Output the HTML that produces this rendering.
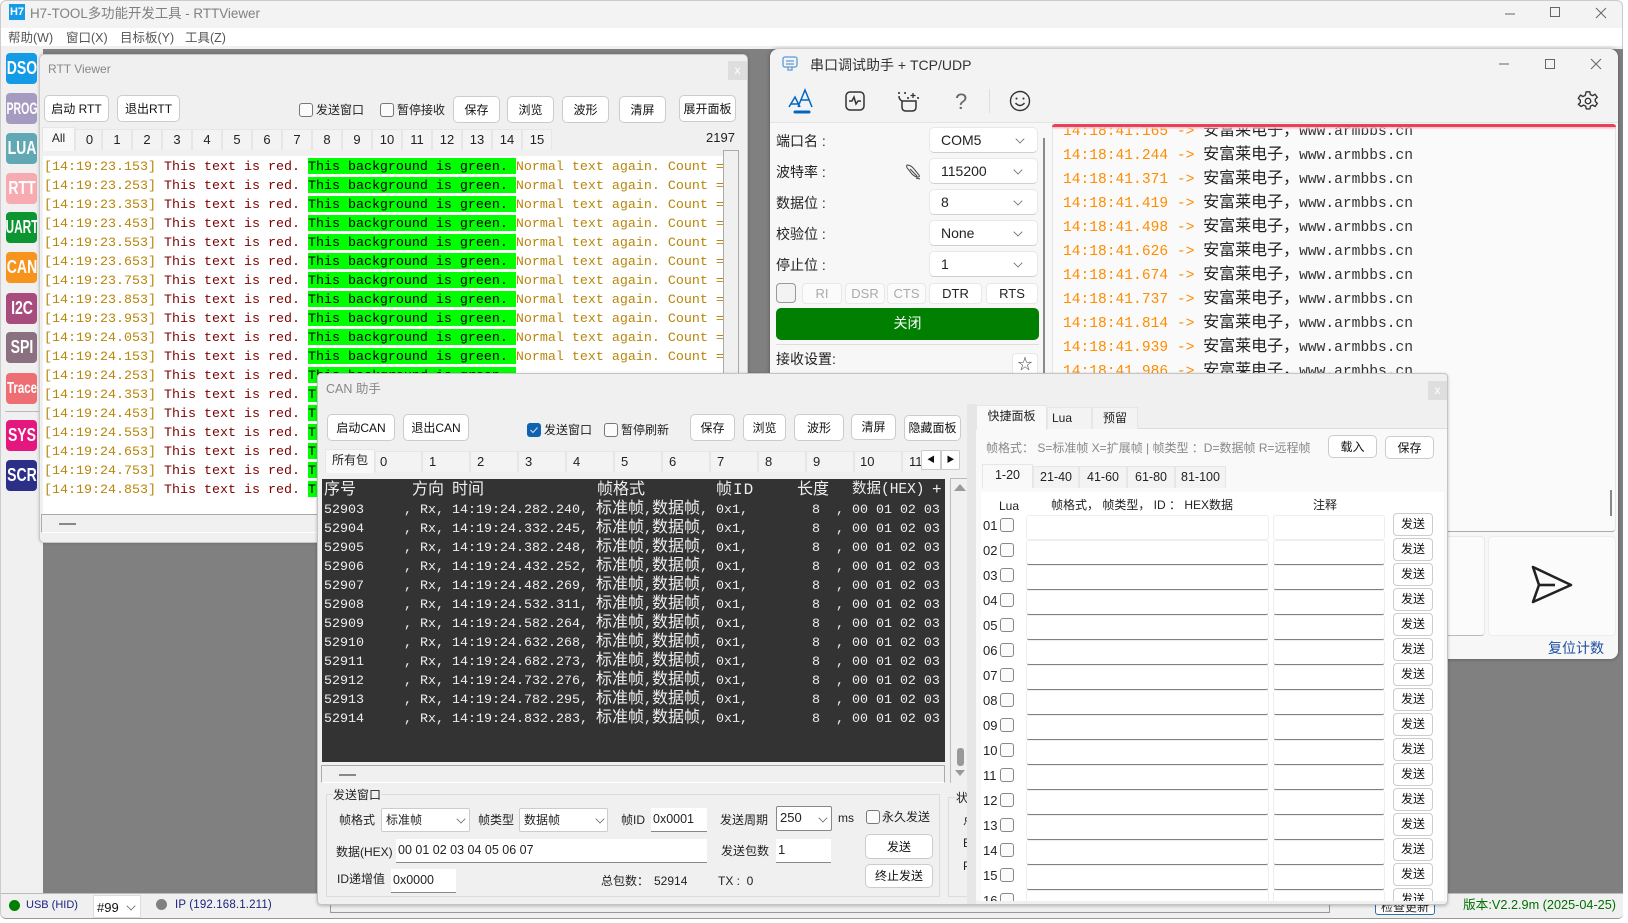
<!DOCTYPE html>
<html lang="zh"><head><meta charset="utf-8"><title>H7-TOOL RTTViewer</title>
<style>
*{box-sizing:border-box;margin:0;padding:0}
html,body{width:1628px;height:923px;overflow:hidden;background:#fff}
body{position:relative;font:12px/16px "Liberation Sans","Noto Sans CJK SC",sans-serif;color:#222}
.p{position:absolute}
.t{position:absolute;white-space:nowrap;line-height:16px}
.b{position:absolute;display:flex;align-items:center;justify-content:center;background:#fff;border:1px solid #ccc;border-radius:5px;white-space:nowrap;font-size:12px;color:#111}
.c{position:absolute;width:14px;height:14px;border:1px solid #777;border-radius:3px;background:#fbfbfb}
.k{position:absolute;width:31px;height:31px;border-radius:4px;color:#fff;font-weight:bold;font-size:18px;line-height:31px;text-align:center;left:6px;overflow:hidden}
.k span{display:block;width:80px;margin-left:-24.5px;text-align:center;transform:scaleX(.78);transform-origin:center}
.tb{position:absolute;background:#f3f3f3;border:1px solid #e6e6e6;border-bottom:0;font-size:13px;padding:2px 0 0 0;height:21px;line-height:16px;text-align:center}
.r{position:absolute;left:1px;height:16px;font:13.33px/20px "Liberation Mono",monospace;white-space:pre;color:#b8860b}
.r i{font-style:normal;color:#800000}.r b{font-weight:normal;background:#0f0;color:#000;display:inline-block;height:16px}
.s{position:absolute;left:10px;font:14.6px/20px "Liberation Mono",monospace;white-space:pre;color:#ff8c00}
.s u{text-decoration:none;font:16px/20px "Noto Sans CJK SC",sans-serif;color:#222}.s em{font-style:normal;color:#333}
.d{position:absolute;left:324px;font:13.33px/16px "Liberation Mono",monospace;white-space:pre;color:#eee}
.d u{text-decoration:none;font:16px/16px "Noto Sans CJK SC",sans-serif}
.h{position:absolute;top:482px;font:16px/16px "Liberation Mono","Noto Sans CJK SC",sans-serif;color:#eee;white-space:nowrap}
.cb{position:absolute;left:929px;width:109px;height:26px;background:#fff;border:1px solid #e8e8e8;border-bottom-color:#d0d0d0;border-radius:5px;font-size:14px;line-height:24px;padding-left:11px;color:#222}
.ch{position:absolute;width:8px;height:8px;border-right:1px solid #666;border-bottom:1px solid #666;transform:rotate(45deg) scale(.8)}
.l{position:absolute;left:776px;font-size:14px;line-height:18px;white-space:nowrap;color:#222}
.m{position:absolute;top:283px;height:21px;background:#fbfbfb;border:1px solid #e8e8e8;border-radius:4px;text-align:center;line-height:19px;font-size:13px;color:#aaa}
.q{position:absolute;left:0;height:25px;width:463px}
.q span{position:absolute;left:2px;top:2px;font-size:13px;line-height:16px}
.q .c{left:19px;top:2px;width:14px;height:14px;border-color:#888}
.q s{position:absolute;left:45px;top:-1px;width:243px;height:25px;background:#fff;border:1px solid #eee;border-bottom:1px solid #808080;border-radius:3px}
.q s+s{left:292px;width:112px}
.q b{position:absolute;left:412px;top:-3px;width:40px;height:23px;background:#fff;border:1px solid #ccc;border-radius:4px;font-weight:normal;font-size:12px;line-height:21px;text-align:center;color:#111}
.in{position:absolute;background:#fff;border-bottom:1px solid #888;font-size:13px;line-height:20px;padding:1px 0 0 2px;white-space:nowrap;overflow:hidden;color:#222}
.y{position:absolute;background:#fff;border:1px solid #ccc;border-radius:2px;font-size:12px;line-height:22px;padding-left:4px;color:#222}
</style></head><body>
<div class="p" style="left:0;top:0;width:1623px;height:919px;background:#f0f0f0;border:1px solid #ccc;border-radius:6px"></div>
<div class="p" style="left:1px;top:1px;width:1621px;height:27px;background:#f3f3f3;border-radius:6px 6px 0 0"></div>
<div class="p" style="left:9px;top:4px;width:16px;height:16px;background:#149be8;color:#fff;font:bold 11px/16px 'Liberation Sans';text-align:center">H7</div>
<div class="t" style="left:30px;top:6px;font-size:13.4px;color:#808080">H7-TOOL多功能开发工具 - RTTViewer</div>
<svg class="p" style="left:1500px;top:2px" width="110" height="20" fill="none" stroke="#666" stroke-width="1"><path d="M5 12h10"/><rect x="50.500" y="5.500" width="9" height="9"/><path d="M96 6l10 10M106 6l-10 10"/></svg>
<div class="p" style="left:1px;top:28px;width:1621px;height:18px;background:#fff"></div>
<div class="t" style="left:8px;top:30px;font-size:12.5px;color:#555">帮助(W)</div>
<div class="t" style="left:66px;top:30px;font-size:12.5px;color:#555">窗口(X)</div>
<div class="t" style="left:120px;top:30px;font-size:12.5px;color:#555">目标板(Y)</div>
<div class="t" style="left:185px;top:30px;font-size:12.5px;color:#555">工具(Z)</div>

<div class="p" style="left:43px;top:49px;width:1580px;height:844px;background:#808080"></div>

<div class="k" style="top:53px;background:#149be8"><span>DSO</span></div>
<div class="k" style="top:93px;background:#a59bc0;font-size:17px"><span style="transform:scaleX(.62)">PROG</span></div>
<div class="k" style="top:133px;background:#5fa8b4"><span>LUA</span></div>
<div class="k" style="top:173px;background:#f7aab0"><span>RTT</span></div>
<div class="k" style="top:212px;background:#0b9632"><span style="transform:scaleX(.66)">UART</span></div>
<div class="k" style="top:252px;background:#f7941d"><span>CAN</span></div>
<div class="k" style="top:293px;background:#a84c7e"><span>I2C</span></div>
<div class="k" style="top:332px;background:#8a7080"><span>SPI</span></div>
<div class="k" style="top:373px;background:#ee6f73;font-size:16px"><span style="transform:scaleX(.72)">Trace</span></div>
<div class="p" style="left:5px;top:411px;width:34px;height:1px;background:#bbb"></div>
<div class="k" style="top:420px;background:#e5177e"><span>SYS</span></div>
<div class="k" style="top:460px;background:#2b2f88"><span>SCR</span></div>

<!-- RTT Viewer -->
<div class="p" style="left:39px;top:54px;width:709px;height:489px;background:#f0f0f0;border:1px solid #c8c8c8;border-radius:5px;box-shadow:0 0 3px rgba(0,0,0,.2)"></div>
<div class="t" style="left:48px;top:61px;font-size:12px;color:#888">RTT Viewer</div>
<div class="p" style="left:728px;top:61px;width:19px;height:19px;background:#dedede;color:#fff;text-align:center;font-size:12px;line-height:18px">x</div>
<div class="b" style="left:44px;top:95px;width:65px;height:27px">启动 RTT</div>
<div class="b" style="left:117px;top:95px;width:63px;height:27px">退出RTT</div>
<div class="c" style="left:299px;top:103px"></div><div class="t" style="left:316px;top:102px">发送窗口</div>
<div class="c" style="left:380px;top:103px"></div><div class="t" style="left:397px;top:102px">暂停接收</div>
<div class="b" style="left:453px;top:96px;width:47px;height:27px">保存</div>
<div class="b" style="left:507px;top:96px;width:47px;height:27px">浏览</div>
<div class="b" style="left:562px;top:96px;width:47px;height:27px">波形</div>
<div class="b" style="left:619px;top:96px;width:47px;height:27px">清屏</div>
<div class="b" style="left:679px;top:95px;width:57px;height:27px">展开面板</div>
<div class="tb" style="left:42px;top:127px;width:33px;height:24px;background:#f8f8f8;font-size:12px;padding-top:2px">All</div>
<div class="tb" style="left:75px;top:129px;width:27px;padding-left:2px">0</div>
<div class="tb" style="left:102px;top:129px;width:30px">1</div>
<div class="tb" style="left:132px;top:129px;width:30px">2</div>
<div class="tb" style="left:162px;top:129px;width:30px">3</div>
<div class="tb" style="left:192px;top:129px;width:30px">4</div>
<div class="tb" style="left:222px;top:129px;width:30px">5</div>
<div class="tb" style="left:252px;top:129px;width:30px">6</div>
<div class="tb" style="left:282px;top:129px;width:30px">7</div>
<div class="tb" style="left:312px;top:129px;width:30px">8</div>
<div class="tb" style="left:342px;top:129px;width:30px">9</div>
<div class="tb" style="left:372px;top:129px;width:30px">10</div>
<div class="tb" style="left:402px;top:129px;width:30px">11</div>
<div class="tb" style="left:432px;top:129px;width:30px">12</div>
<div class="tb" style="left:462px;top:129px;width:30px">13</div>
<div class="tb" style="left:492px;top:129px;width:30px">14</div>
<div class="tb" style="left:522px;top:129px;width:30px">15</div>
<div class="t" style="left:706px;top:130px;font-size:13px">2197</div>
<div class="p" style="left:43px;top:156px;width:680px;height:358px;background:#fff;overflow:hidden">
<div style="position:absolute;left:0;top:2px">
<div class="r" style="top:0">[14:19:23.153] <i>This text is red. </i><b>This background is green. </b>Normal text again. Count = 1</div>
<div class="r" style="top:19px">[14:19:23.253] <i>This text is red. </i><b>This background is green. </b>Normal text again. Count = 1</div>
<div class="r" style="top:38px">[14:19:23.353] <i>This text is red. </i><b>This background is green. </b>Normal text again. Count = 1</div>
<div class="r" style="top:57px">[14:19:23.453] <i>This text is red. </i><b>This background is green. </b>Normal text again. Count = 1</div>
<div class="r" style="top:76px">[14:19:23.553] <i>This text is red. </i><b>This background is green. </b>Normal text again. Count = 1</div>
<div class="r" style="top:95px">[14:19:23.653] <i>This text is red. </i><b>This background is green. </b>Normal text again. Count = 1</div>
<div class="r" style="top:114px">[14:19:23.753] <i>This text is red. </i><b>This background is green. </b>Normal text again. Count = 1</div>
<div class="r" style="top:133px">[14:19:23.853] <i>This text is red. </i><b>This background is green. </b>Normal text again. Count = 1</div>
<div class="r" style="top:152px">[14:19:23.953] <i>This text is red. </i><b>This background is green. </b>Normal text again. Count = 1</div>
<div class="r" style="top:171px">[14:19:24.053] <i>This text is red. </i><b>This background is green. </b>Normal text again. Count = 1</div>
<div class="r" style="top:190px">[14:19:24.153] <i>This text is red. </i><b>This background is green. </b>Normal text again. Count = 1</div>
<div class="r" style="top:209px">[14:19:24.253] <i>This text is red. </i><b>This background is green. </b></div>
<div class="r" style="top:228px">[14:19:24.353] <i>This text is red. </i><b>This background is green. </b></div>
<div class="r" style="top:247px">[14:19:24.453] <i>This text is red. </i><b>This background is green. </b></div>
<div class="r" style="top:266px">[14:19:24.553] <i>This text is red. </i><b>This background is green. </b></div>
<div class="r" style="top:285px">[14:19:24.653] <i>This text is red. </i><b>This background is green. </b></div>
<div class="r" style="top:304px">[14:19:24.753] <i>This text is red. </i><b>This background is green. </b></div>
<div class="r" style="top:323px">[14:19:24.853] <i>This text is red. </i><b>This background is green. </b></div>
</div></div>
<div class="p" style="left:723px;top:150px;width:16px;height:364px;background:#f0f0f0;border:1px solid #aaa;border-bottom:0"></div>
<div class="p" style="left:41px;top:514px;width:700px;height:19px;background:#f0f0f0;border:1px solid #aaa;border-bottom-color:#fff"></div>
<div class="p" style="left:59px;top:523px;width:17px;height:2px;background:#888"></div>

<!-- Serial window -->
<div class="p" style="left:770px;top:49px;width:848px;height:610px;background:#f3f3f3;border-radius:8px;box-shadow:0 0 4px rgba(0,0,0,.35)"></div>
<svg class="p" style="left:781px;top:55px" width="18" height="18" fill="none" stroke="#5b9bd5" stroke-width="1.300"><rect x="2" y="2" width="14" height="10" rx="2"/><path d="M5 6h8M5 9h8M7 12v3h4v-3"/></svg>
<div class="t" style="left:810px;top:57px;font-size:14px;color:#333">串口调试助手 + TCP/UDP</div>
<svg class="p" style="left:1495px;top:55px" width="115" height="20" fill="none" stroke="#666" stroke-width="1"><path d="M4 9h10"/><rect x="50.500" y="4.500" width="9" height="9"/><path d="M96 4l10 10M106 4l-10 10"/></svg>
<svg class="p" style="left:788px;top:88px" width="26" height="30" fill="none" stroke="#0067c0" stroke-width="1.500"><path d="M1 19L7 9l5 10M3 16h7M10 19L17 2l7 17M13 12h8"/><path d="M7 24h14" stroke-width="3" stroke-linecap="round"/></svg>
<svg class="p" style="left:845px;top:90px" width="20" height="22" fill="none" stroke="#333" stroke-width="1.500"><rect x="1" y="2" width="18" height="18" rx="4"/><path d="M4 11h3l2-4 2 7 2-3h3"/></svg>
<svg class="p" style="left:897px;top:90px" width="24" height="24" fill="none" stroke="#333" stroke-width="1.500"><path d="M5 11h14v6q0 4-4 4H9q-4 0-4-4v-6c-2-1-3-3-3-5"/><path d="M16 3v5M13.500 5.500h5" stroke-width="1.300"/><path d="M2 3h.1M8 3h.1M21 8h.1M11 8h.1" stroke-linecap="round" stroke-width="2"/></svg>
<div class="t" style="left:955px;top:91px;font-size:22px;line-height:22px;color:#666">?</div>
<div class="p" style="left:989px;top:89px;width:1px;height:24px;background:#ddd"></div>
<svg class="p" style="left:1009px;top:90px" width="22" height="22" fill="none" stroke="#333" stroke-width="1.400"><circle cx="11" cy="11" r="9.500"/><path d="M6.500 13q4.500 5 9 0"/><path d="M7.500 8.500v.1M14.500 8.500v.1" stroke-linecap="round" stroke-width="2"/></svg>
<svg class="p" style="left:1577px;top:90px" width="22" height="22" viewBox="0 0 24 24" fill="none" stroke="#333" stroke-width="1.500"><circle cx="12" cy="12" r="3"/><path d="M10 2h4l.6 3 2.400 1.100 2.700-1.500 2.400 3.400-2.200 2 .1 2.600 2.200 2-2.400 3.400-2.700-1.500-2.400 1.100-.6 3h-4l-.6-3-2.400-1.100-2.700 1.500L1.500 15.600l2.200-2-.1-2.600-2.200-2L3.800 5.600l2.700 1.500L8.900 6z" stroke-linejoin="round"/></svg>
<div class="p" style="left:770px;top:122px;width:848px;height:1px;background:#e4e4e4"></div>
<div class="p" style="left:770px;top:123px;width:848px;height:536px;background:#f7f7f7;border-radius:0 0 8px 8px"></div>
<div class="l" style="top:132px">端口名 :</div>
<div class="l" style="top:163px">波特率 :</div>
<div class="l" style="top:194px">数据位 :</div>
<div class="l" style="top:225px">校验位 :</div>
<div class="l" style="top:256px">停止位 :</div>
<svg class="p" style="left:905px;top:163px" width="17" height="17" fill="none" stroke="#444" stroke-width="1"><path d="M2 2q4 0 7 4l5 6q1 2-1 2-3 0-6-3L3 6Q1 4 2 2zM5 6l7 7M11 15l4 1"/></svg>
<div class="cb" style="top:127px">COM5</div><div class="ch" style="left:1016px;top:135px"></div>
<div class="cb" style="top:158px">115200</div><div class="ch" style="left:1014px;top:166px"></div>
<div class="cb" style="top:189px">8</div><div class="ch" style="left:1014px;top:197px"></div>
<div class="cb" style="top:220px">None</div><div class="ch" style="left:1014px;top:228px"></div>
<div class="cb" style="top:251px">1</div><div class="ch" style="left:1014px;top:259px"></div>
<div class="p" style="left:776px;top:283px;width:20px;height:20px;background:#f3f3f3;border:1px solid #999;border-radius:4px"></div>
<div class="m" style="left:802px;width:40px">RI</div>
<div class="m" style="left:845px;width:40px">DSR</div>
<div class="m" style="left:887px;width:39px">CTS</div>
<div class="m" style="left:929px;width:53px;background:#fff;color:#222">DTR</div>
<div class="m" style="left:986px;width:52px;background:#fff;color:#222">RTS</div>
<div class="p" style="left:776px;top:308px;width:263px;height:32px;background:#007f00;border-radius:5px;color:#fff;text-align:center;font-size:14px;line-height:31px">关闭</div>
<div class="p" style="left:776px;top:344px;width:263px;height:1px;background:#ddd"></div>
<div class="l" style="top:350px">接收设置:</div>
<div class="p" style="left:1012px;top:353px;width:26px;height:24px;background:#fff;border:1px solid #e8e8e8;border-radius:4px;text-align:center;font-size:15px;line-height:22px;color:#444">☆</div>
<div class="p" style="left:1043px;top:138px;width:2px;height:240px;background:#8a8a8a"></div>
<div class="p" style="left:1052px;top:124px;width:564px;height:408px;background:#fafafa;border:1px solid #e6e6e6;border-top:0;border-bottom:1px solid #aaa;border-radius:0 0 4px 4px;overflow:hidden">
<div class="s" style="top:-6px">14:18:41.165 -> <u>安富莱电子，</u><em>www.armbbs.cn</em></div>
<div class="s" style="top:18px">14:18:41.244 -> <u>安富莱电子，</u><em>www.armbbs.cn</em></div>
<div class="s" style="top:42px">14:18:41.371 -> <u>安富莱电子，</u><em>www.armbbs.cn</em></div>
<div class="s" style="top:66px">14:18:41.419 -> <u>安富莱电子，</u><em>www.armbbs.cn</em></div>
<div class="s" style="top:90px">14:18:41.498 -> <u>安富莱电子，</u><em>www.armbbs.cn</em></div>
<div class="s" style="top:114px">14:18:41.626 -> <u>安富莱电子，</u><em>www.armbbs.cn</em></div>
<div class="s" style="top:138px">14:18:41.674 -> <u>安富莱电子，</u><em>www.armbbs.cn</em></div>
<div class="s" style="top:162px">14:18:41.737 -> <u>安富莱电子，</u><em>www.armbbs.cn</em></div>
<div class="s" style="top:186px">14:18:41.814 -> <u>安富莱电子，</u><em>www.armbbs.cn</em></div>
<div class="s" style="top:210px">14:18:41.939 -> <u>安富莱电子，</u><em>www.armbbs.cn</em></div>
<div class="s" style="top:234px">14:18:41.986 -> <u>安富莱电子，</u><em>www.armbbs.cn</em></div>
</div>
<div class="p" style="left:1052px;top:124px;width:564px;height:3px;background:#e8405a;border-radius:3px 3px 0 0"></div>
<div class="p" style="left:1052px;top:127px;width:564px;height:3px;background:linear-gradient(#f8c0c8,rgba(250,250,250,0))"></div>
<div class="p" style="left:1610px;top:490px;width:2px;height:26px;background:#888"></div>
<div class="p" style="left:1400px;top:536px;width:85px;height:100px;background:#fbfbfb;border:1px solid #e8e8e8;border-bottom-color:#bbb;border-radius:4px"></div>
<div class="p" style="left:1488px;top:536px;width:128px;height:100px;background:#fbfbfb;border:1px solid #eee;border-radius:4px"></div>
<svg class="p" style="left:1530px;top:564px" width="44" height="42" fill="none" stroke="#222" stroke-width="2.600"><path d="M3 3l38 18L3 38l6-17z" stroke-linejoin="round"/><path d="M9 21h16"/></svg>
<div class="t" style="left:1548px;top:640px;font-size:14px;color:#1e4fa0">复位计数</div>

<!-- status bar -->
<div class="p" style="left:1px;top:893px;width:1622px;height:26px;background:#f0f0f0;border-top:1px solid #bbb;border-bottom:1px solid #999;border-radius:0 0 5px 5px"></div>
<div class="p" style="left:9px;top:900px;width:11px;height:11px;border-radius:50%;background:#008000"></div>
<div class="t" style="left:26px;top:897px;font-size:11px;color:#1a237e">USB (HID)</div>
<div class="p" style="left:93px;top:895px;width:48px;height:23px;background:#fff;border:1px solid #ddd;font-size:13px;line-height:23px;padding-left:3px;color:#111">#99</div>
<div class="ch" style="left:127px;top:902px"></div>
<div class="p" style="left:156px;top:899px;width:11px;height:11px;border-radius:50%;background:#808080"></div>
<div class="t" style="left:175px;top:897px;font-size:11.5px;color:#1a237e;letter-spacing:.15px">IP (192.168.1.211)</div>
<div class="p" style="left:1375px;top:900px;width:60px;height:15px;background:#fff;border:1px solid #2a6fb0;border-radius:3px;font-size:12px;line-height:13px;text-align:center;color:#222">检查更新</div>
<div class="t" style="left:1463px;top:897px;font-size:12.7px;color:#007000">版本:V2.2.9m (2025-04-25)</div>

<!-- CAN window -->
<div class="p" style="left:330px;top:905px;width:1000px;height:8px;background:#eee;border:1px solid #999;border-top:0"></div>
<div class="p" style="left:317px;top:373px;width:1131px;height:532px;background:#f0f0f0;border:1px solid #c4c4c4;border-radius:4px;box-shadow:0 1px 3px rgba(0,0,0,.25)"></div>
<div class="t" style="left:326px;top:381px;font-size:12.500px;color:#888">CAN 助手</div>
<div class="p" style="left:1428px;top:381px;width:19px;height:19px;background:#dedede;color:#fff;text-align:center;font-size:12px;line-height:18px">x</div>
<div class="b" style="left:327px;top:414px;width:68px;height:27px">启动CAN</div>
<div class="b" style="left:403px;top:414px;width:66px;height:27px">退出CAN</div>
<div class="c" style="left:527px;top:423px;background:#0f62b0;border-color:#0f62b0"></div>
<svg class="p" style="left:527px;top:423px" width="14" height="14" fill="none" stroke="#dde" stroke-width="1"><path d="M3.500 7l2.500 2.500 4.500-5"/></svg>
<div class="t" style="left:544px;top:422px">发送窗口</div>
<div class="c" style="left:604px;top:423px"></div><div class="t" style="left:621px;top:422px">暂停刷新</div>
<div class="b" style="left:690px;top:414px;width:45px;height:27px">保存</div>
<div class="b" style="left:743px;top:414px;width:43px;height:27px">浏览</div>
<div class="b" style="left:794px;top:414px;width:50px;height:27px">波形</div>
<div class="b" style="left:851px;top:414px;width:45px;height:26px">清屏</div>
<div class="b" style="left:904px;top:415px;width:57px;height:26px">隐藏面板</div>
<div class="tb" style="left:325px;top:449px;width:50px;height:24px;font-size:12px;background:#f8f8f8;padding-top:2px">所有包</div>
<div class="tb" style="left:375px;top:451px;width:47px;text-align:left;padding-left:4px">0</div>
<div class="tb" style="left:422px;top:451px;width:48px;text-align:left;padding-left:6px">1</div>
<div class="tb" style="left:470px;top:451px;width:48px;text-align:left;padding-left:6px">2</div>
<div class="tb" style="left:518px;top:451px;width:48px;text-align:left;padding-left:6px">3</div>
<div class="tb" style="left:566px;top:451px;width:48px;text-align:left;padding-left:6px">4</div>
<div class="tb" style="left:614px;top:451px;width:48px;text-align:left;padding-left:6px">5</div>
<div class="tb" style="left:662px;top:451px;width:48px;text-align:left;padding-left:6px">6</div>
<div class="tb" style="left:710px;top:451px;width:48px;text-align:left;padding-left:6px">7</div>
<div class="tb" style="left:758px;top:451px;width:48px;text-align:left;padding-left:6px">8</div>
<div class="tb" style="left:806px;top:451px;width:48px;text-align:left;padding-left:6px">9</div>
<div class="tb" style="left:854px;top:451px;width:48px;text-align:left;padding-left:5px">10</div>
<div class="tb" style="left:902px;top:451px;width:20px;text-align:left;padding-left:6px;overflow:hidden">11</div>
<div class="b" style="left:921px;top:450px;width:20px;height:20px;font-size:8px;border-radius:2px 0 0 2px">◀</div>
<div class="b" style="left:941px;top:450px;width:19px;height:20px;font-size:8px;border-radius:0 2px 2px 0">▶</div>

<div class="p" style="left:322px;top:479px;width:623px;height:283px;background:#333"></div>
<div class="h" style="left:324px">序号</div><div class="h" style="left:412px">方向</div><div class="h" style="left:452px">时间</div><div class="h" style="left:597px">帧格式</div><div class="h" style="left:716px;letter-spacing:1px">帧ID</div><div class="h" style="left:797px">长度</div><div class="h" style="left:852px;font-size:14.500px">数据(HEX)</div><div class="h" style="left:932px">+</div>
<div class="d" style="top:498px">52903     , Rx, 14:19:24.282.240, <u>标准帧</u>,<u>数据帧</u>, 0x1,        8  , 00 01 02 03</div>
<div class="d" style="top:517px">52904     , Rx, 14:19:24.332.245, <u>标准帧</u>,<u>数据帧</u>, 0x1,        8  , 00 01 02 03</div>
<div class="d" style="top:536px">52905     , Rx, 14:19:24.382.248, <u>标准帧</u>,<u>数据帧</u>, 0x1,        8  , 00 01 02 03</div>
<div class="d" style="top:555px">52906     , Rx, 14:19:24.432.252, <u>标准帧</u>,<u>数据帧</u>, 0x1,        8  , 00 01 02 03</div>
<div class="d" style="top:574px">52907     , Rx, 14:19:24.482.269, <u>标准帧</u>,<u>数据帧</u>, 0x1,        8  , 00 01 02 03</div>
<div class="d" style="top:593px">52908     , Rx, 14:19:24.532.311, <u>标准帧</u>,<u>数据帧</u>, 0x1,        8  , 00 01 02 03</div>
<div class="d" style="top:612px">52909     , Rx, 14:19:24.582.264, <u>标准帧</u>,<u>数据帧</u>, 0x1,        8  , 00 01 02 03</div>
<div class="d" style="top:631px">52910     , Rx, 14:19:24.632.268, <u>标准帧</u>,<u>数据帧</u>, 0x1,        8  , 00 01 02 03</div>
<div class="d" style="top:650px">52911     , Rx, 14:19:24.682.273, <u>标准帧</u>,<u>数据帧</u>, 0x1,        8  , 00 01 02 03</div>
<div class="d" style="top:669px">52912     , Rx, 14:19:24.732.276, <u>标准帧</u>,<u>数据帧</u>, 0x1,        8  , 00 01 02 03</div>
<div class="d" style="top:688px">52913     , Rx, 14:19:24.782.295, <u>标准帧</u>,<u>数据帧</u>, 0x1,        8  , 00 01 02 03</div>
<div class="d" style="top:707px">52914     , Rx, 14:19:24.832.283, <u>标准帧</u>,<u>数据帧</u>, 0x1,        8  , 00 01 02 03</div>
<div class="p" style="left:950px;top:478px;width:17px;height:305px;background:#f0f0f0;border:1px solid #bbb;border-bottom:0;border-right:0"></div>
<svg class="p" style="left:953px;top:482px" width="14" height="300" fill="#999"><path d="M1 9l6-7 6 7z"/><path d="M2 288h10l-5 6z"/><rect x="4" y="266" width="7" height="18" rx="3"/></svg>
<div class="p" style="left:321px;top:765px;width:624px;height:18px;background:#f0f0f0;border:1px solid #aaa;border-bottom-color:#fff"></div>
<div class="p" style="left:339px;top:774px;width:17px;height:2px;background:#888"></div>

<div class="p" style="left:326px;top:794px;width:614px;height:103px;border:1px solid #dcdcdc"></div>
<div class="t" style="left:333px;top:787px;background:#f0f0f0">发送窗口</div>
<div class="t" style="left:339px;top:812px">帧格式</div>
<div class="y" style="left:381px;top:808px;width:89px;height:24px">标准帧</div><div class="ch" style="left:457px;top:815px"></div>
<div class="t" style="left:478px;top:812px">帧类型</div>
<div class="y" style="left:519px;top:808px;width:89px;height:24px">数据帧</div><div class="ch" style="left:596px;top:815px"></div>
<div class="t" style="left:621px;top:812px">帧ID</div>
<div class="in" style="left:651px;top:808px;width:56px;height:24px;font-size:12.500px">0x0001</div>
<div class="t" style="left:720px;top:812px">发送周期</div>
<div class="y" style="left:776px;top:806px;width:56px;height:25px;border-color:#888;padding-left:3px;font-size:13px">250</div><div class="ch" style="left:819px;top:814px"></div>
<div class="t" style="left:838px;top:810px;font-size:12px">ms</div>
<div class="c" style="left:866px;top:810px"></div><div class="t" style="left:882px;top:809px">永久发送</div>
<div class="t" style="left:336px;top:844px">数据(HEX)</div>
<div class="in" style="left:396px;top:839px;width:311px;height:24px;font-size:12.500px">00 01 02 03 04 05 06 07</div>
<div class="t" style="left:721px;top:843px">发送包数</div>
<div class="in" style="left:776px;top:839px;width:55px;height:24px">1</div>
<div class="b" style="left:865px;top:834px;width:68px;height:25px">发送</div>
<div class="t" style="left:337px;top:871px">ID递增值</div>
<div class="in" style="left:391px;top:869px;width:65px;height:24px;font-size:12.500px">0x0000</div>
<div class="t" style="left:601px;top:873px">总包数：</div>
<div class="t" style="left:654px;top:873px">52914</div>
<div class="t" style="left:718px;top:873px">TX :&nbsp;&nbsp;0</div>
<div class="b" style="left:865px;top:864px;width:68px;height:24px">终止发送</div>
<div class="p" style="left:948px;top:797px;width:20px;height:100px;border:1px solid #dcdcdc;border-right:0"></div>
<div class="t" style="left:956px;top:790px;background:#f0f0f0">状</div>
<div class="t" style="left:963px;top:812px;width:4px;overflow:hidden">点</div>
<div class="t" style="left:963px;top:835px;width:4px;overflow:hidden">E</div>
<div class="t" style="left:963px;top:858px;width:4px;overflow:hidden">P</div>
<div class="p" style="left:967px;top:404px;width:9px;height:500px;background:#e6e6e6"></div>

<!-- right panel -->
<div class="p" style="left:976px;top:404px;width:471px;height:497px;background:#f9f9f9;border-top:1px solid #eee;overflow:hidden"></div>
<div class="p" style="left:976px;top:404px;width:471px;height:25px;background:#f0f0f0;border-bottom:1px solid #ddd"></div>
<div class="tb" style="left:976px;top:405px;width:71px;height:25px;background:#f9f9f9;font-size:12px;padding-top:2px">快捷面板</div>
<div class="tb" style="left:1047px;top:407px;width:45px;height:22px;text-align:left;padding-left:4px;font-size:12px">Lua</div>
<div class="tb" style="left:1092px;top:407px;width:46px;height:22px;font-size:12px">预留</div>
<div class="t" style="left:986px;top:440px;color:#888">帧格式： S=标准帧 X=扩展帧 | 帧类型 ：D=数据帧 R=远程帧</div>
<div class="b" style="left:1328px;top:435px;width:49px;height:23px">载入</div>
<div class="b" style="left:1385px;top:436px;width:49px;height:23px">保存</div>
<div class="tb" style="left:982px;top:464px;width:51px;height:24px;background:#f9f9f9;font-size:12.500px">1-20</div>
<div class="tb" style="left:1033px;top:466px;width:46px;height:22px;font-size:12.500px">21-40</div>
<div class="tb" style="left:1079px;top:466px;width:48px;height:22px;font-size:12.500px">41-60</div>
<div class="tb" style="left:1127px;top:466px;width:48px;height:22px;font-size:12.500px">61-80</div>
<div class="tb" style="left:1175px;top:466px;width:51px;height:22px;font-size:12.500px">81-100</div>
<div class="p" style="left:981px;top:492px;width:463px;height:409px;background:#fff;overflow:hidden">
<div class="t" style="left:18px;top:6px">Lua</div>
<div class="t" style="left:70px;top:5px">帧格式， 帧类型， ID ： HEX数据</div>
<div class="t" style="left:332px;top:5px">注释</div>
<div class="q" style="top:24px"><span>01</span><i class="c"></i><s style="border-bottom:1px solid #eee"></s><s style="border-bottom:1px solid #eee"></s><b>发送</b></div>
<div class="q" style="top:49px"><span>02</span><i class="c"></i><s></s><s></s><b>发送</b></div>
<div class="q" style="top:74px"><span>03</span><i class="c"></i><s></s><s></s><b>发送</b></div>
<div class="q" style="top:99px"><span>04</span><i class="c"></i><s></s><s></s><b>发送</b></div>
<div class="q" style="top:124px"><span>05</span><i class="c"></i><s></s><s></s><b>发送</b></div>
<div class="q" style="top:149px"><span>06</span><i class="c"></i><s></s><s></s><b>发送</b></div>
<div class="q" style="top:174px"><span>07</span><i class="c"></i><s></s><s></s><b>发送</b></div>
<div class="q" style="top:199px"><span>08</span><i class="c"></i><s></s><s></s><b>发送</b></div>
<div class="q" style="top:224px"><span>09</span><i class="c"></i><s></s><s></s><b>发送</b></div>
<div class="q" style="top:249px"><span>10</span><i class="c"></i><s></s><s></s><b>发送</b></div>
<div class="q" style="top:274px"><span>11</span><i class="c"></i><s></s><s></s><b>发送</b></div>
<div class="q" style="top:299px"><span>12</span><i class="c"></i><s></s><s></s><b>发送</b></div>
<div class="q" style="top:324px"><span>13</span><i class="c"></i><s></s><s></s><b>发送</b></div>
<div class="q" style="top:349px"><span>14</span><i class="c"></i><s></s><s></s><b>发送</b></div>
<div class="q" style="top:374px"><span>15</span><i class="c"></i><s></s><s></s><b>发送</b></div>
<div class="q" style="top:399px"><span>16</span><i class="c"></i><s></s><s></s><b>发送</b></div>
</div>
</body></html>
